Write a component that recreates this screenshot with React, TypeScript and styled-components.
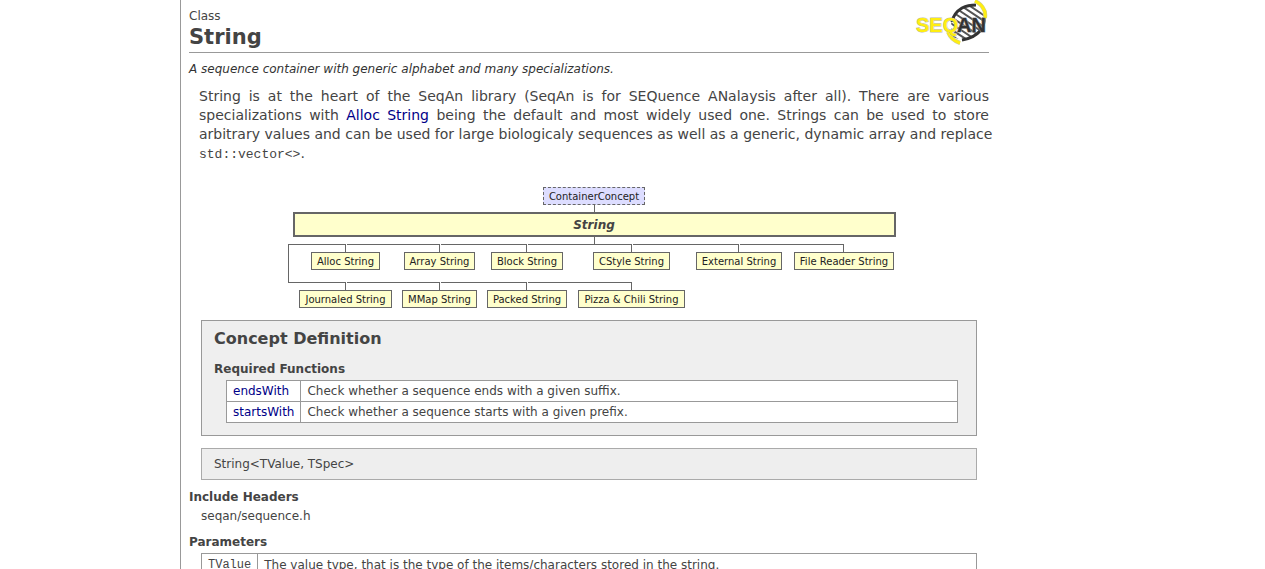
import React from "react";
import styled, { createGlobalStyle } from "styled-components";

const sans = '"DejaVu Sans", Verdana, sans-serif';
const mono = '"Liberation Mono", "Courier New", monospace';

const GlobalStyle = createGlobalStyle`
  * { box-sizing: border-box; }
  body {
    margin: 0;
    background: #fff;
    color: #444;
    font: 12px/16px ${sans};
  }
  h1, h2, h3, p { margin: 0; }
`;

const Page = styled.main`
  height: 100vh;
  overflow: hidden;
  margin-left: 180px;
  padding-left: 8px;
  border-left: 1px solid #999;
`;

const Content = styled.article`
  max-width: 800px;
`;

const Header = styled.header`
  display: flex;
  justify-content: space-between;
  align-items: flex-start;
  height: 53px;
  border-bottom: 1px solid #999;
`;

const Titles = styled.div`
  padding-top: 8px;
`;

const Title = styled.h1`
  font-size: 21px;
  line-height: 26px;
`;

const Logo = styled.svg`
  display: block;
  width: 74px;
  height: 48px;
`;

const Summary = styled.p`
  padding-top: 8px;
  font-style: italic;
  color: #333;
`;

const Description = styled.p`
  padding: 10px 0 0 10px;
  font-size: 14px;
  line-height: 19px;
`;

const Line = styled.span<{ $last?: boolean }>`
  display: block;
  white-space: nowrap;
  text-align: justify;
  text-align-last: ${(p) => (p.$last ? "left" : "justify")};
`;

const Code = styled.code<{ $size: number }>`
  font-family: ${mono};
  font-size: ${(p) => p.$size}px;
  line-height: 16px;
`;

const Link = styled.a`
  color: #008;
  text-decoration: none;
`;

const Tree = styled.div`
  width: max-content;
  margin: 24px auto 0;
  padding-left: 10px;
  font-size: 10px;
  color: #333;
`;

const Trunk = styled.div`
  display: flex;
  flex-direction: column;
  align-items: center;
  padding: 0 5px;
`;

const Node = styled.a<{ $concept?: boolean }>`
  display: block;
  padding: 1px 5px 0;
  line-height: 15px;
  white-space: nowrap;
  color: #222;
  text-decoration: none;
  background: ${(p) => (p.$concept ? "#ddf" : "#ffc")};
  border: 1px ${(p) => (p.$concept ? "dashed" : "solid")} #666;
`;

const Current = styled.strong`
  align-self: stretch;
  padding-top: 1px;
  border: 2px solid #666;
  background: #ffc;
  color: #444;
  font-size: 12px;
  font-style: italic;
  line-height: 20px;
  text-align: center;
`;

const Stem = styled.span`
  width: 1px;
  height: 7px;
  background: #666;
`;

const Branches = styled.div`
  display: grid;
  grid-template-columns: 6px 104px 84px 91px 118px 97px 113px;
`;

const Rail = styled.span<{ $down?: boolean }>`
  grid-column: 1;
  border-top: 1px solid #666;
  border-left: ${(p) => (p.$down ? "1px solid #666" : "none")};
`;

const Branch = styled.div`
  display: flex;
  flex-direction: column;
  align-items: center;
  padding-bottom: 12px;
`;

const Joint = styled.span<{ $last: boolean }>`
  display: grid;
  grid-template-columns: 1fr 1fr;
  align-self: stretch;
  height: 8px;

  &::before {
    content: "";
    border: solid #666;
    border-width: 1px 1px 0 0;
  }
  &::after {
    content: "";
    margin-left: 1px;
    border-top: ${(p) => (p.$last ? "none" : "1px solid #666")};
  }
`;

const Panel = styled.section`
  margin: 0 12px;
  padding: 8px 18px 12px 12px;
  border: 1px solid #999;
  background: #efefef;
`;

const PanelTitle = styled.h2`
  font-size: 16px;
  line-height: 20px;
  padding-bottom: 12px;
`;

const Heading = styled.h3`
  font-size: 12px;
  line-height: 17px;
`;

const Table = styled.table`
  width: 100%;
  border-collapse: collapse;
  background: #fff;

  td {
    border: 1px solid #999;
    padding: 2px 6px;
    line-height: 16px;
  }
  td:first-child {
    width: 1px;
    white-space: nowrap;
  }
`;

const Indent = styled.div<{ $right?: number }>`
  padding: 2px ${(p) => p.$right ?? 0}px 0 12px;
`;

const Signature = styled.p`
  margin: 12px 12px 9px;
  padding: 7px 12px;
  border: 1px solid #aaa;
  background: #eee;
`;

const Section = styled.section`
  padding-bottom: 10px;
`;

const rows = [
  ["Alloc String", "Array String", "Block String", "CStyle String", "External String", "File Reader String"],
  ["Journaled String", "MMap String", "Packed String", "Pizza & Chili String"],
];

const functions = [
  ["endsWith", "Check whether a sequence ends with a given suffix."],
  ["startsWith", "Check whether a sequence starts with a given prefix."],
];

function SeqanLogo() {
  return (
    <Logo viewBox="0 0 74 48" role="img" aria-label="SeqAn">
      <defs>
        <clipPath id="strand">
          <path d="M37 37L36 20L45 9L61 5L69 15L68 28L60 37L48 40Z" />
        </clipPath>
      </defs>
      <g clipPath="url(#strand)" stroke="#555" strokeWidth="2">
        <path d="M52 4l24 16M45 5l30 20M42 9l30 20M39 13l30 20M36 17l32 21M34 22l30 20M34 28l26 17M34 34l20 13" />
      </g>
      <g fill="none">
        <path d="M37 22C38 16 42 11 47 8Q53 5 61 5" stroke="#333" strokeWidth="3" />
        <path d="M36 32L37 37" stroke="#333" strokeWidth="2" />
        <path d="M69 17Q70 25 65 31Q59 38 47 40" stroke="#333" strokeWidth="3" />
        <path d="M60 1Q66 4 68 8Q71 12 70 18" stroke="#cc9" strokeWidth="4" />
        <path d="M60 1Q66 4 68 8Q71 12 70 18" stroke="#fe1" strokeWidth="3" />
        <path d="M33 32Q36 40 45 43" stroke="#cc9" strokeWidth="4" />
        <path d="M33 32Q36 40 45 43" stroke="#fe1" strokeWidth="3" />
      </g>
      <g fontFamily="Liberation Sans, Arial, sans-serif" fontSize="20" fontWeight="700">
        <text x="1" y="32" fill="#fe1" stroke="#bba" strokeWidth="1" paintOrder="stroke">SEQ</text>
        <text x="42" y="32" fill="#333" stroke="#999" strokeWidth="1" paintOrder="stroke">AN</text>
      </g>
    </Logo>
  );
}

export default function App() {
  return (
    <>
      <GlobalStyle />
      <Page>
        <Content>
          <Header>
            <Titles>
              <div>Class</div>
              <Title>String</Title>
            </Titles>
            <SeqanLogo />
          </Header>
          <Summary>A sequence container with generic alphabet and many specializations.</Summary>
          <Description>
            <Line>
              String is at the heart of the SeqAn library (SeqAn is for SEQuence ANalaysis after all). There are
              various{" "}
            </Line>
            <Line>
              specializations with <Link href="#alloc-string">Alloc String</Link> being the default and most widely
              used one. Strings can be used to store{" "}
            </Line>
            <Line>
              arbitrary values and can be used for large biologicaly sequences as well as a generic, dynamic array and
              replace{" "}
            </Line>
            <Line $last>
              <Code $size={13}>std::vector&lt;&gt;</Code>.
            </Line>
          </Description>

          <Tree>
            <Trunk>
              <Node href="#container-concept" $concept>ContainerConcept</Node>
              <Stem />
              <Current>String</Current>
              <Stem />
            </Trunk>
            <Branches>
              {rows.map((row, r) => (
                <React.Fragment key={r}>
                  <Rail $down={r < rows.length - 1} />
                  {row.map((name, i) => (
                    <Branch key={name}>
                      <Joint $last={i === row.length - 1} />
                      <Node href="#specialization">{name}</Node>
                    </Branch>
                  ))}
                </React.Fragment>
              ))}
            </Branches>
          </Tree>

          <Panel>
            <PanelTitle>Concept Definition</PanelTitle>
            <Heading>Required Functions</Heading>
            <Indent>
              <Table>
                <tbody>
                  {functions.map(([name, text]) => (
                    <tr key={name}>
                      <td><Link href={"#" + name}>{name}</Link></td>
                      <td>{text}</td>
                    </tr>
                  ))}
                </tbody>
              </Table>
            </Indent>
          </Panel>

          <Signature>String&lt;TValue, TSpec&gt;</Signature>

          <Section>
            <Heading>Include Headers</Heading>
            <Indent>seqan/sequence.h</Indent>
          </Section>
          <Section>
            <Heading>Parameters</Heading>
            <Indent $right={12}>
              <Table>
                <tbody>
                  <tr>
                    <td><Code $size={12}>TValue</Code></td>
                    <td>The value type, that is the type of the items/characters stored in the string.</td>
                  </tr>
                </tbody>
              </Table>
            </Indent>
          </Section>
        </Content>
      </Page>
    </>
  );
}
